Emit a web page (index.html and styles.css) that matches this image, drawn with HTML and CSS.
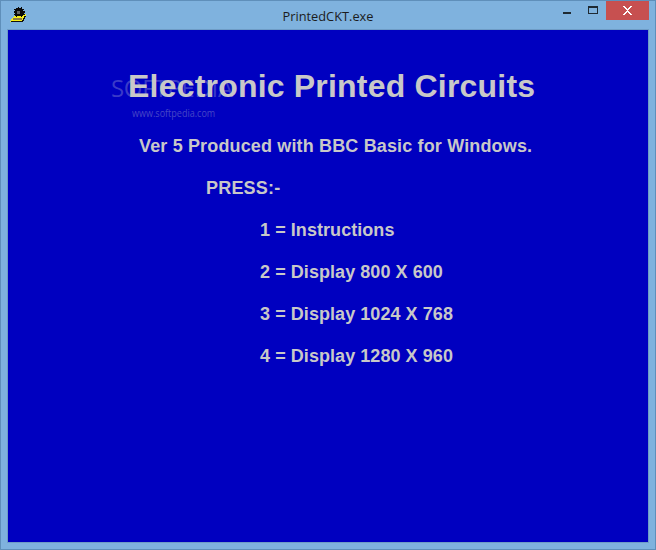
FILE: index.html
```html
<!DOCTYPE html>
<html lang="en">
<head>
<meta charset="utf-8">
<title>PrintedCKT.exe</title>
<link rel="stylesheet" href="styles.css">
</head>
<body>
<div class="window">
  <header class="titlebar">
    <svg class="app-icon" width="17" height="16" viewBox="0 0 17 16" shape-rendering="crispEdges">
      <path fill="#f4ee1c" d="M5 8h2v1h5V8h2V7h2v2h-1v2h-1v2h-1v1H1v1H0v-1h1v-2h1v-1h1v-1h1V9h1z"/>
      <path fill="#0b0b0b" d="M6 1h2V0h1v1h2V0h1v2h2v1h-1v1h2v2h-1v1h1v1h-2v1h-1v1h-1V9H7v1H6V9H5V8H4V7h1V6H4V4h1V3H4V2h2z"/>
      <rect x="7" y="4" width="3" height="3" fill="#666"/>
      <rect x="3" y="11" width="9" height="2" fill="#8f7d42"/>
      <path fill="#111" d="M16 9v1h-1v2h-1v2h-1v1H1v-1h11v-1h1v-2h1V9z"/>
    </svg>
    <span class="title">PrintedCKT.exe</span>
    <div class="controls">
      <span class="btn btn-min"><i class="min-glyph"></i></span>
      <span class="btn btn-max"><i class="max-glyph"></i></span>
      <span class="btn btn-close">
        <svg width="9" height="9" viewBox="0 0 9 9" shape-rendering="crispEdges"><path fill="#fff" d="M0 0h2v1h1v1h1v1h1V2h1V1h1V0h2v1H8v1H7v1H6v1H5v1h1v1h1v1h1v1h1v1H7V8H6V7H5V6H4v1H3v1H2v1H0V8h1V7h1V6h1V5h1V4H3V3H2V2H1V1H0z"/></svg>
      </span>
    </div>
  </header>
  <main class="screen">
    <div class="watermark">
      <div class="wm-logo">SOFTPEDIA</div>
      <div class="wm-url">www.softpedia.com</div>
    </div>
    <h1 class="heading">Electronic Printed Circuits</h1>
    <p class="line ver">Ver 5 Produced with BBC Basic for Windows.</p>
    <p class="line press">PRESS:-</p>
    <p class="line opt">1 = Instructions</p>
    <p class="line opt">2 = Display 800 X 600</p>
    <p class="line opt">3 = Display 1024 X 768</p>
    <p class="line opt">4 = Display 1280 X 960</p>
  </main>
</div>
</body>
</html>
```
FILE: styles.css
```css
* { box-sizing: border-box; }
html, body { margin: 0; padding: 0; }
body { width: 656px; height: 550px; overflow: hidden; background: #7fb2de; }
.window {
  width: 656px; height: 550px;
  display: flex; flex-direction: column;
  background: #7fb2de;
  border: 1px solid #5f8fba;
  padding: 0 7px 7px;
}
.titlebar {
  height: 29px; flex: none;
  display: flex; align-items: flex-start;
  position: relative;
  color: #222;
}
.app-icon { margin: 6px 0 0 2px; }
.title {
  position: absolute; left: 0; right: 0; top: 7px;
  text-align: center;
  font: 12.8px/16px "Open Sans", "Noto Sans", sans-serif;
  color: #1c1c1c;
}
.controls { margin-left: auto; display: flex; margin-right: -1px; }
.btn { display: flex; justify-content: center; height: 19px; }
.btn-min { width: 26px; }
.btn-max { width: 26px; }
.btn-close { width: 43px; background: #c75050; align-items: center; }
.min-glyph { width: 8px; height: 2px; background: #1f2a33; margin-top: 11px; }
.max-glyph { width: 10px; height: 8px; border: 1px solid #1f2a33; border-top-width: 2px; margin-top: 5px; }
.screen {
  flex: 1;
  position: relative;
  background: #0000c0;
  outline: 1px solid #6e9cc6;
  color: #c8c8c8;
  font-family: "Liberation Sans", Arial, sans-serif;
  font-weight: bold;
  overflow: hidden;
}
.heading { margin: 36px 0 0 120px; font-size: 32px; line-height: 40px; font-weight: bold; letter-spacing: 0.2px; position: relative; }
.line { margin: 0; height: 42px; font-size: 18px; line-height: 42px; letter-spacing: 0.06px; }
.ver { margin: 19px 0 0 131px; letter-spacing: 0.15px; }
.press { margin-left: 198px; letter-spacing: 0.2px; }
.opt { margin-left: 252px; }
.watermark { position: absolute; left: 103px; top: 45px; }
.wm-logo { font: 24px/26px "Open Sans", sans-serif; letter-spacing: -0.3px; color: #3a3ac8; }
.wm-url { font: 11px/14px "Open Sans", sans-serif; margin: 5px 0 0 21px; color: #4646c6; transform: scaleX(.82); transform-origin: left; white-space: nowrap; }
```
